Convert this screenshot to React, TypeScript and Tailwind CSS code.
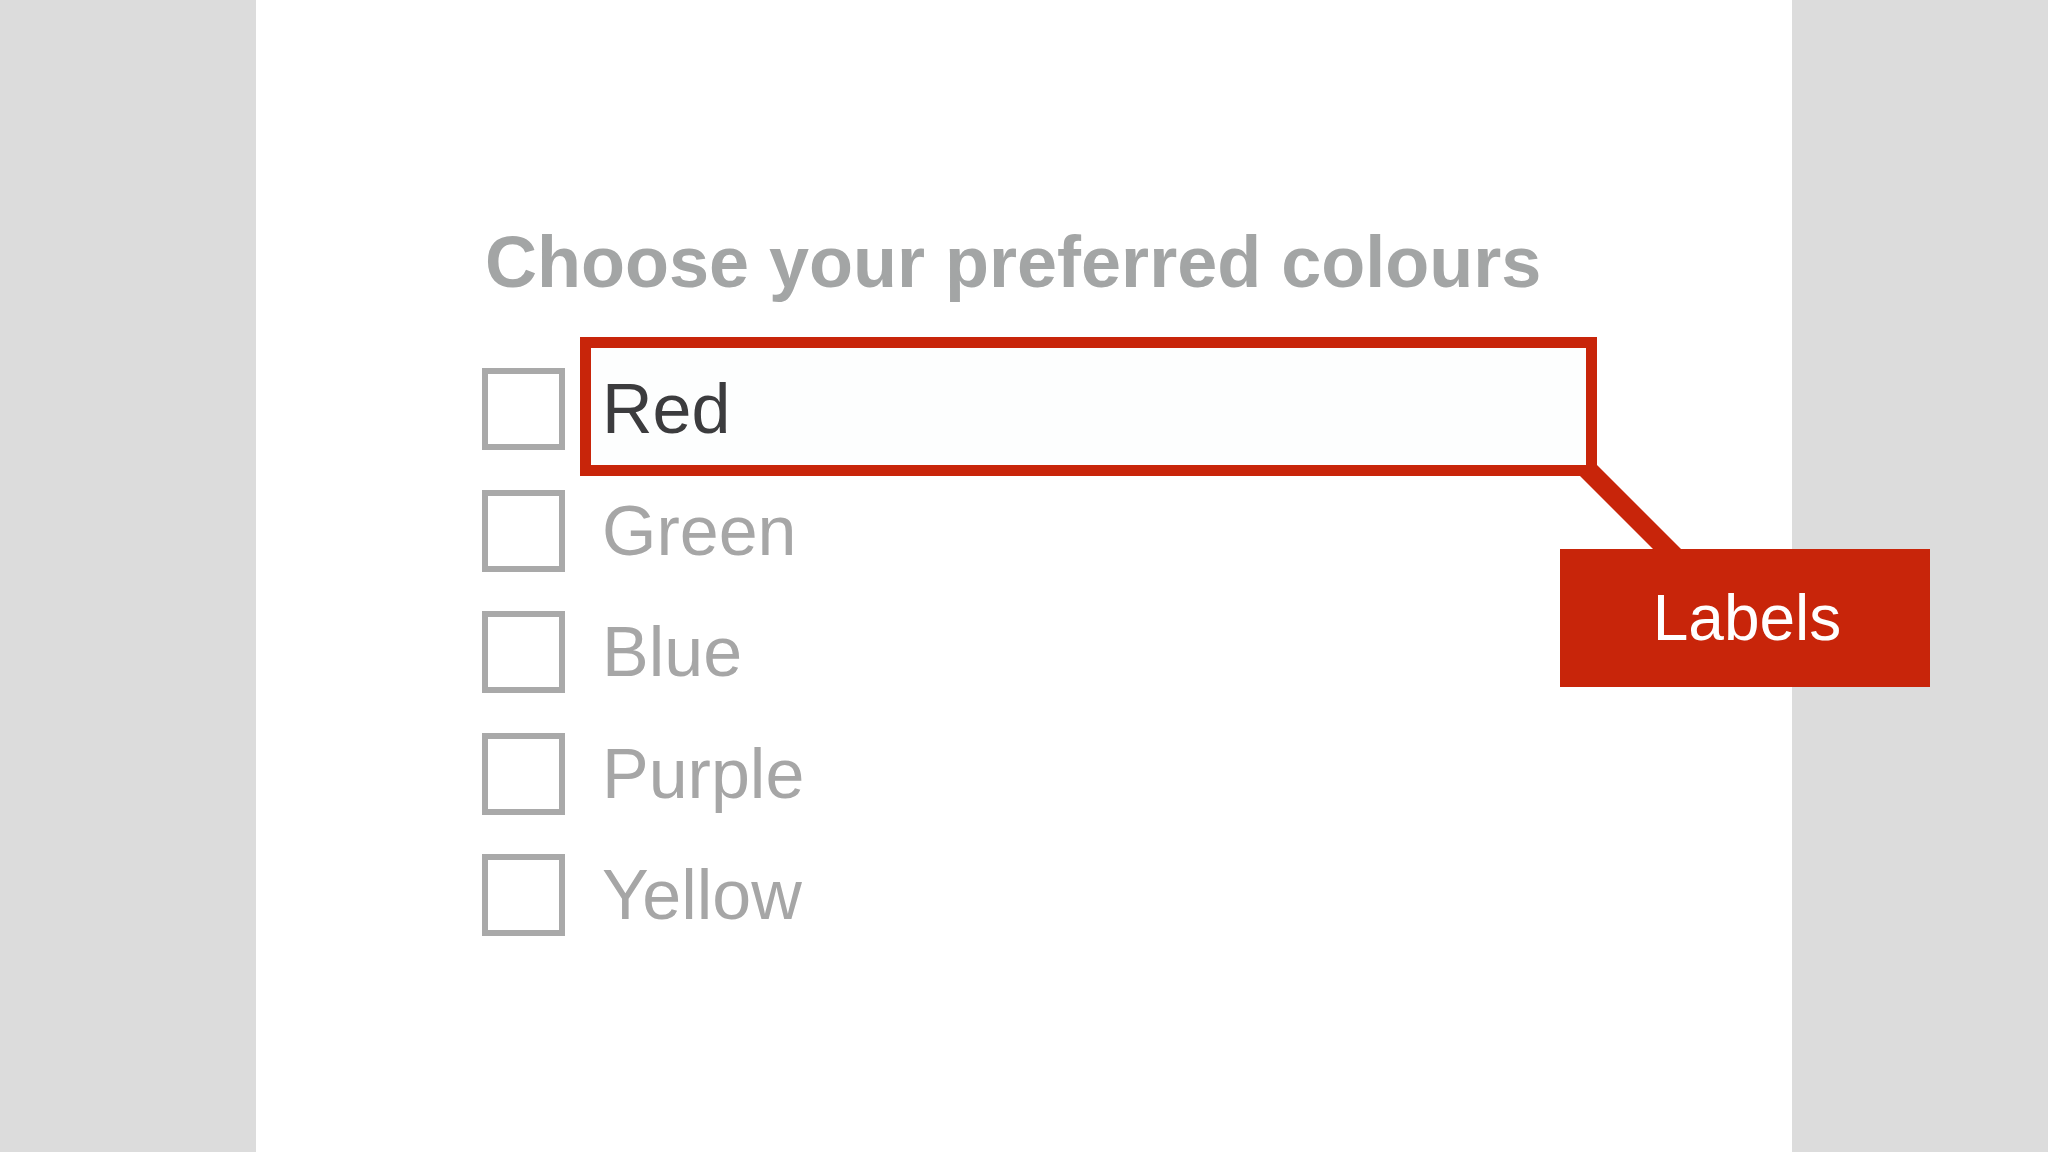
import React from 'react';

const colours = ['Red', 'Green', 'Blue', 'Purple', 'Yellow'];

const Checkbox: React.FC = () => (
  <div className="w-[83px] h-[82px] shrink-0 border-[6px] border-[#a9a9a9] bg-white" />
);

const ColourRow: React.FC<{ name: string; highlighted: boolean }> = ({ name, highlighted }) => (
  <div className="relative flex items-center h-[82px]">
    <Checkbox />
    {highlighted && (
      <div className="absolute left-[98px] -top-[31px] w-[1017px] h-[139px] border-[11px] border-[#c8250a] bg-[#fdfefe]" />
    )}
    <span
      className={
        'relative ml-[37px] text-[70px] leading-[82px] ' +
        (highlighted ? 'text-[#3c3c3e]' : 'text-[#a6a6a6]')
      }
    >
      {name}
    </span>
  </div>
);

export default function App() {
  return (
    <div
      className="relative flex w-full h-[1152px] bg-[#dcdcdc] overflow-hidden"
      style={{ fontFamily: '"Liberation Sans", Arial, Helvetica, sans-serif' }}
    >
      <div className="w-[256px] shrink-0" />
      <main className="w-[1536px] shrink-0 bg-white pl-[226px] pt-[226px]">
        <h1 className="ml-[3px] text-[72px] leading-[72px] font-bold text-[#a3a5a5]">
          Choose your preferred colours
        </h1>
        <div className="mt-[70px] flex flex-col gap-[39.6px]">
          {colours.map((c, i) => (
            <ColourRow key={c} name={c} highlighted={i === 0} />
          ))}
        </div>
      </main>
      <div className="flex-1" />

      {/* callout pointing at the highlighted label */}
      <svg
        className="absolute left-0 top-0 pointer-events-none"
        width="2048"
        height="1152"
        viewBox="0 0 2048 1152"
      >
        <polygon points="1580,476 1597,465 1681,549 1653,549" fill="#c8250a" />
      </svg>
      <div className="absolute left-[1560px] top-[549px] w-[370px] h-[138px] bg-[#c8250a] flex items-center justify-center">
        <span className="ml-[4px] text-[64px] leading-none text-white">Labels</span>
      </div>
    </div>
  );
}
